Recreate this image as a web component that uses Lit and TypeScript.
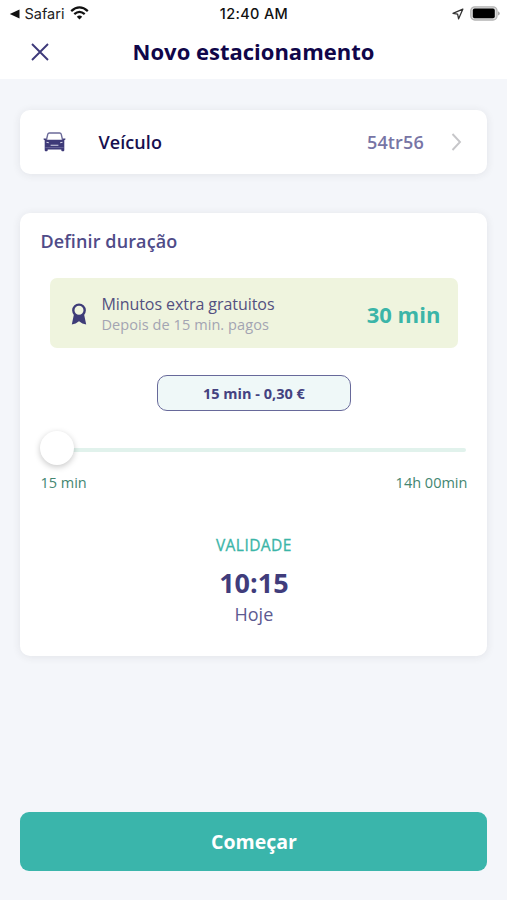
import { LitElement, html, css } from "lit";
import { customElement, property } from "lit/decorators.js";

@customElement("status-bar")
class StatusBar extends LitElement {
  static styles = css`
    :host {
      display: grid;
      grid-template-columns: 1fr auto 1fr;
      align-items: center;
      height: 28px;
      padding: 0 7px 0 9px;
      font: 400 15px/28px Inter, sans-serif;
      color: #111;
    }
    .left, .right { display: flex; align-items: center; }
    .back { margin-right: 4.5px; }
    .app { font-size: 14.5px; color: #222; }
    .wifi { margin-left: 6px; margin-top: -3px; }
    .time { font-weight: 500; font-size: 14.5px; letter-spacing: 0.35px; margin-right: 1px; }
    .right { justify-content: flex-end; gap: 6px; }
    .battery { margin-top: -2px; }
  `;
  render() {
    return html`
      <div class="left">
        <svg class="back" width="11" height="10" viewBox="0 0 11 10"><path d="M10.5 0.6V9.4L0.8 5Z" fill="#111" /></svg>
        <span class="app">Safari</span>
        <svg class="wifi" width="19" height="14" viewBox="0 0 19 14" fill="none" stroke="#111" stroke-width="2.3">
          <path d="M1.2 5.1Q9.5-2.3 17.8 5.1" />
          <path d="M4.3 8.2Q9.5 3.6 14.7 8.2" />
          <path d="M9.5 13.4L6.8 10.7Q9.5 8.5 12.2 10.7Z" fill="#111" stroke="none" />
        </svg>
      </div>
      <span class="time">12:40 AM</span>
      <div class="right">
        <svg width="12" height="12" viewBox="0 0 12 12"><path d="M10.8 1.2L1 5.3L5.6 6.2L6.6 10.8Z" fill="none" stroke="#333" stroke-width="1.3" stroke-linejoin="round" /></svg>
        <svg class="battery" width="30" height="15" viewBox="0 0 30 15">
          <rect x="0.8" y="0.8" width="26.2" height="13.2" rx="4" fill="#ddd" stroke="#b4b4b4" stroke-width="1.3" />
          <rect x="2.8" y="2.6" width="22" height="9.6" rx="1.8" fill="#000" />
          <path d="M28 5.2Q29.8 6 29.8 7.4T28 9.6Z" fill="#aaa" />
        </svg>
      </div>
    `;
  }
}

@customElement("vehicle-row")
class VehicleRow extends LitElement {
  @property() plate = "";
  static styles = css`
    :host {
      display: flex;
      align-items: center;
      box-sizing: border-box;
      height: 64px;
      padding: 0 25px 0 23px;
      border-radius: 10px;
      background: #fff;
      box-shadow: 0 1px 8px rgba(40, 40, 60, 0.09);
      font: 600 18px/26px "Open Sans", sans-serif;
    }
    .label { margin-left: 32px; color: #170f4f; flex: 1; letter-spacing: 0.1px; }
    .plate { color: #7775a5; margin-right: 27.5px; letter-spacing: 0.15px; }
  `;
  render() {
    return html`
      <svg width="23" height="20" viewBox="0 0 23 20">
        <path d="M3.4 8L4.8 2.2Q5.1 1 6.4 1H16.6Q17.9 1 18.2 2.2L19.6 8" fill="none" stroke="#6c6b99" stroke-width="1.4" />
        <path d="M0.6 6.4H2.8L3.4 7.8H19.6L20.2 6.4H22.4V7.4L21.3 8.2V18Q21.3 19.2 20.4 19.2H19.2Q18.3 19.2 18.3 18V17.4H4.7V18Q4.7 19.2 3.8 19.2H2.6Q1.7 19.2 1.7 18V8.2L0.6 7.4Z" fill="#3e3a78" />
        <path d="M3.5 10.2L5.8 10.8M19.5 10.2L17.2 10.8M7.6 13.2H15.4" fill="none" stroke="#d5d5e6" stroke-width="1.1" />
        <path d="M2.4 15.6H20.6" stroke="#8583ae" stroke-width="0.6" />
      </svg>
      <span class="label">Veículo</span>
      <span class="plate">${this.plate}</span>
      <svg width="11" height="18" viewBox="0 0 11 18"><path d="M1.5 1L9 9L1.5 17" fill="none" stroke="#c6c6c9" stroke-width="1.9" /></svg>
    `;
  }
}

@customElement("duration-card")
class DurationCard extends LitElement {
  static styles = css`
    :host {
      display: block;
      box-sizing: border-box;
      height: 443px;
      padding: 14px 20px 0;
      border-radius: 10px;
      background: #fff;
      box-shadow: 0 1px 8px rgba(40, 40, 60, 0.09);
      font: 400 15px/20px "Open Sans", sans-serif;
      color: #464380;
    }
    .heading { font-size: 18px; font-weight: 600; line-height: 28px; letter-spacing: 0.12px; color: #4f4b88; }
    .promo {
      display: flex;
      align-items: center;
      box-sizing: border-box;
      height: 70px;
      margin: 23px 9px 0 10px;
      padding: 0 18px 0 21px;
      border-radius: 7px;
      background: #eff4de;
    }
    .ribbon { margin-top: 1px; }
    .text { margin-left: 14px; flex: 1; padding-top: 2px; }
    .line { font-size: 16px; line-height: 21px; letter-spacing: -0.06px; color: #535080; }
    .sub { font-size: 14.5px; line-height: 20px; letter-spacing: 0.08px; color: #a3a4b2; }
    .bonus { font-size: 22px; font-weight: 700; line-height: 32px; padding-top: 2px; color: #3bb5a8; }
    .pill {
      box-sizing: border-box;
      width: 194px;
      height: 36px;
      margin: 27px auto 0;
      border: 1.5px solid #67699a;
      border-radius: 10px;
      background: #eff8f8;
      text-align: center;
      font-weight: 700;
      font-size: 14.5px;
      line-height: 35px;
      color: #444280;
    }
    .slider { display: flex; align-items: center; height: 34px; margin: 20px 1px 0 0; }
    .knob {
      width: 34px;
      height: 34px;
      border-radius: 50%;
      background: #fff;
      box-shadow: 0 2px 6px rgba(0, 0, 0, 0.22);
      z-index: 1;
    }
    .track { flex: 1; height: 4px; margin: 4px 0 0 -2px; border-radius: 2px; background: #e1f2ec; }
    .range { display: flex; justify-content: space-between; margin-top: 8px; font-size: 14.5px; color: #438671; }
    .valid { text-align: center; margin-top: 42px; }
    .caption { font-size: 15.5px; font-weight: 500; line-height: 20px; letter-spacing: 0.45px; -webkit-text-stroke: 0.3px #3bb5a8; color: #3bb5a8; }
    .hour { font-size: 27px; font-weight: 700; line-height: 36px; margin-top: 10px; color: #403c7b; }
    .day { font-size: 18px; line-height: 26px; color: #5d5a91; }
  `;
  render() {
    return html`
      <div class="heading">Definir duração</div>
      <div class="promo">
        <svg class="ribbon" width="16" height="22" viewBox="0 0 16 22">
          <path d="M3 11L0.8 21.4L4.6 20.4L8 18.2L11.4 20.4L15.2 21.4L13 11Z" fill="#3e3c78" />
          <circle cx="8" cy="7.3" r="5.7" fill="#eff4de" stroke="#3e3c78" stroke-width="2.4" />
        </svg>
        <div class="text">
          <div class="line">Minutos extra gratuitos</div>
          <div class="sub">Depois de 15 min. pagos</div>
        </div>
        <span class="bonus">30 min</span>
      </div>
      <div class="pill">15 min - 0,30 €</div>
      <div class="slider"><div class="knob"></div><div class="track"></div></div>
      <div class="range"><span>15 min</span><span>14h 00min</span></div>
      <div class="valid">
        <div class="caption">VALIDADE</div>
        <div class="hour">10:15</div>
        <div class="day">Hoje</div>
      </div>
    `;
  }
}

@customElement("app-root")
class AppRoot extends LitElement {
  static styles = css`
    :host {
      display: flex;
      flex-direction: column;
      box-sizing: border-box;
      height: 900px;
      background: #f4f6fa;
      font-family: "Open Sans", sans-serif;
    }
    .top { height: 79px; background: #fff; }
    .nav { display: grid; grid-template-columns: 40px 1fr 40px; align-items: center; height: 48px; padding: 0 20px; }
    .close { margin-left: 11px; }
    .title { margin: -2px 0 0; text-align: center; font-size: 22px; font-weight: 700; line-height: 30px; color: #100649; }
    .main { display: flex; flex-direction: column; flex: 1; gap: 39px; padding: 31px 19.6px 29.5px 20.4px; }
    .start {
      height: 58.5px;
      margin-top: auto;
      padding-top: 2px;
      border: 0;
      border-radius: 9px;
      background: #3ab5ab;
      color: #fff;
      font: 700 19.5px/26px "Open Sans", sans-serif;
    }
  `;
  render() {
    return html`
      <div class="top">
        <status-bar></status-bar>
        <div class="nav">
          <svg class="close" width="18" height="18" viewBox="0 0 18 18"><path d="M1 1L17 17M17 1L1 17" stroke="#3d397a" stroke-width="1.9" /></svg>
          <h1 class="title">Novo estacionamento</h1>
        </div>
      </div>
      <div class="main">
        <vehicle-row plate="54tr56"></vehicle-row>
        <duration-card></duration-card>
        <button class="start">Começar</button>
      </div>
    `;
  }
}
